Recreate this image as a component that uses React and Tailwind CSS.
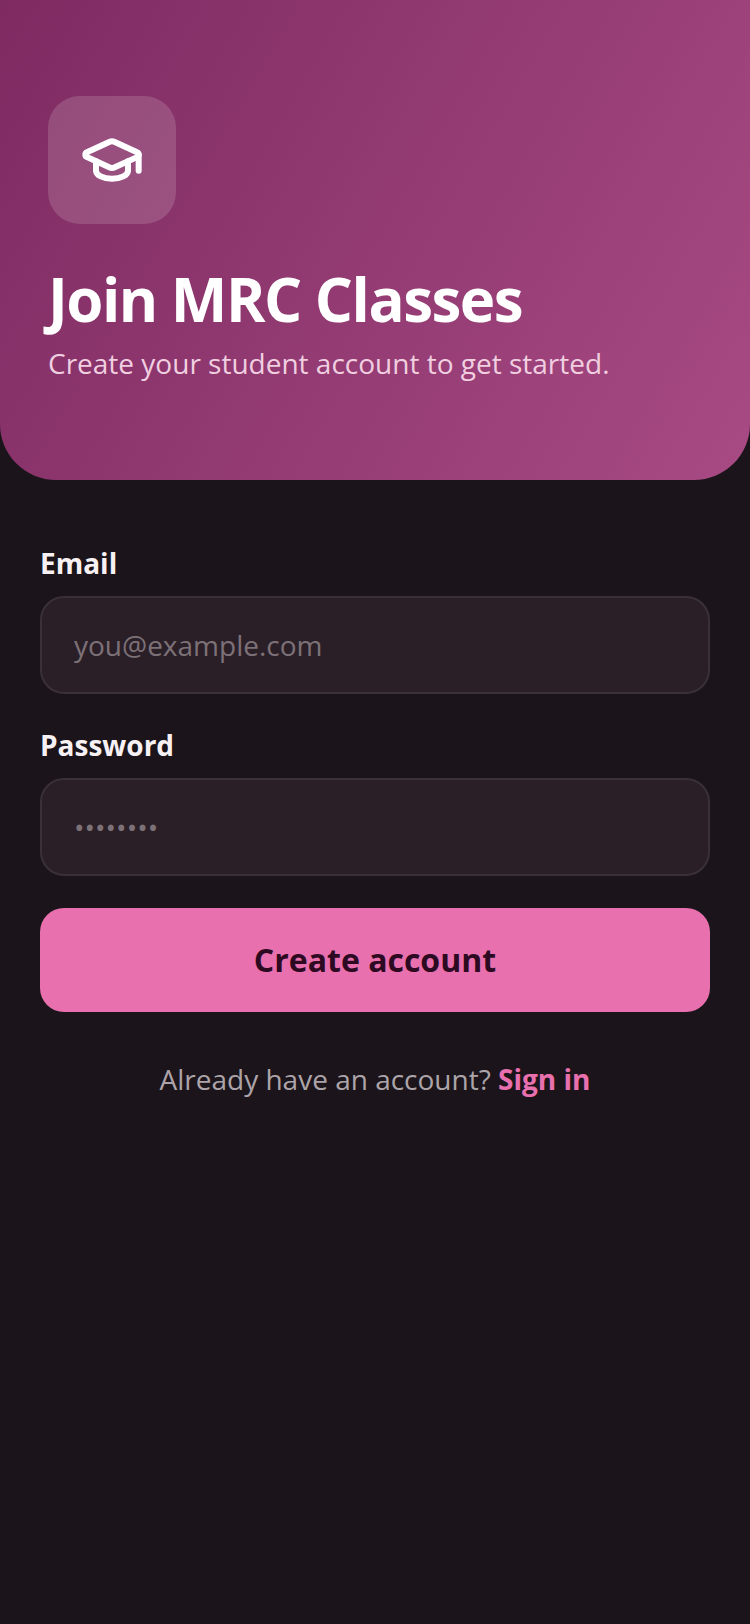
import React from "react";
import { GraduationCap } from "lucide-react";

const font = "font-['Open_Sans',sans-serif]";

function Field({ label, type, placeholder }) {
  return (
    <div className="flex flex-col gap-[14px]">
      <label className="text-[28px] leading-[38px] font-bold text-[#f8f1f4]">{label}</label>
      <input
        type={type}
        placeholder={placeholder}
        className="h-[98px] w-full rounded-3xl border-2 border-[#3a3038] bg-[#2a1f27] px-8 text-[28px] text-white outline-none placeholder:text-[#7d7178]"
      />
    </div>
  );
}

export default function App() {
  return (
    <div className={`${font} min-h-[1624px] bg-[#1b151b]`}>
      <header className="h-[480px] rounded-b-[56px] bg-[linear-gradient(120deg,#7e2b62,#a84a83)] px-12 pt-24">
        <div className="flex h-32 w-32 items-center justify-center rounded-[32px] bg-white/15">
          <GraduationCap size={64} strokeWidth={2.25} className="text-white" />
        </div>
        <h1 className="mt-[39px] text-[60px] leading-[72px] font-bold tracking-tight text-white">Join MRC Classes</h1>
        <p className="mt-2 text-[28px] leading-[40px] text-[#f0cfe0]">Create your student account to get started.</p>
      </header>

      <main className="flex flex-col gap-8 px-10 pt-[64px]">
        <Field label="Email" type="email" placeholder="you@example.com" />
        <Field label="Password" type="password" placeholder="••••••••" />
        <button className="h-[104px] rounded-3xl bg-[#e970ae] text-[32px] font-bold text-[#2d0a22]">Create account</button>
        <p className="mt-[15px] text-center text-[28px] leading-[40px] text-[#ada4a9]">
          Already have an account? <a className="font-bold text-[#e970ae]">Sign in</a>
        </p>
      </main>
    </div>
  );
}
